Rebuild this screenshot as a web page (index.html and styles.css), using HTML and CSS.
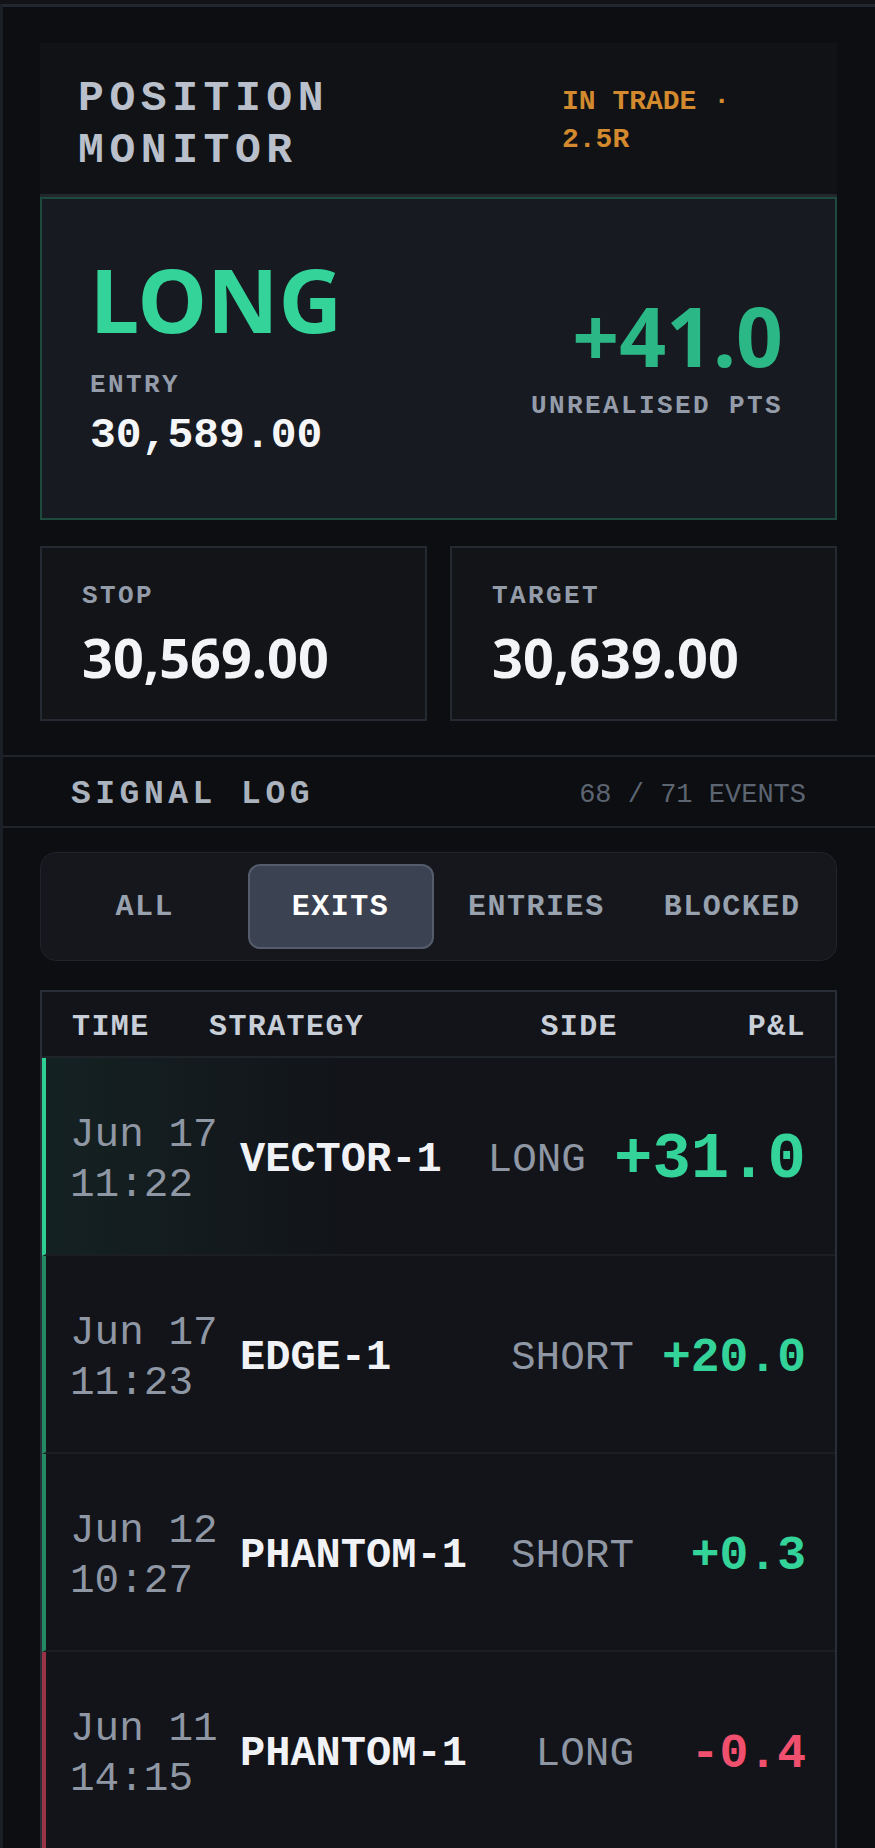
FILE: index.html
```html
<!DOCTYPE html>
<html>
<head>
    <title>Position Monitor</title>
    <link rel="stylesheet" href="styles.css">
</head>
<body>
    <div class="frame">
        <section class="monitor">
            <header class="monitor-head">
                <h1 class="title">POSITION MONITOR</h1>
                <span class="status">IN TRADE · 2.5R</span>
            </header>

            <div class="position">
                <div class="position-main">
                    <div class="side-big">LONG</div>
                    <div class="label entry-label">ENTRY</div>
                    <div class="entry-value">30,589.00</div>
                </div>
                <div class="position-pnl">
                    <div class="pnl-big">+41.0</div>
                    <div class="label pnl-label">UNREALISED PTS</div>
                </div>
            </div>

            <div class="levels">
                <div class="level-card">
                    <div class="label">STOP</div>
                    <div class="level-value">30,569.00</div>
                </div>
                <div class="level-card">
                    <div class="label">TARGET</div>
                    <div class="level-value">30,639.00</div>
                </div>
            </div>
        </section>

        <section class="log">
            <div class="log-head">
                <h2 class="log-title">SIGNAL LOG</h2>
                <span class="log-count">68 / 71 EVENTS</span>
            </div>

            <div class="log-body">
                <div class="tabs">
                    <button class="tab">ALL</button>
                    <button class="tab active">EXITS</button>
                    <button class="tab">ENTRIES</button>
                    <button class="tab">BLOCKED</button>
                </div>

                <div class="signal-table">
                    <div class="table-head">
                        <span class="h-time">TIME</span>
                        <span class="h-strategy">STRATEGY</span>
                        <span class="h-side">SIDE</span>
                        <span class="h-pnl">P&amp;L</span>
                    </div>

                    <div class="signal-row win latest">
                        <div class="time">Jun 17<br>11:22</div>
                        <div class="strategy">VECTOR-1</div>
                        <div class="side">LONG</div>
                        <div class="pnl up">+31.0</div>
                    </div>
                    <div class="signal-row win">
                        <div class="time">Jun 17<br>11:23</div>
                        <div class="strategy">EDGE-1</div>
                        <div class="side">SHORT</div>
                        <div class="pnl up">+20.0</div>
                    </div>
                    <div class="signal-row win">
                        <div class="time">Jun 12<br>10:27</div>
                        <div class="strategy">PHANTOM-1</div>
                        <div class="side">SHORT</div>
                        <div class="pnl up">+0.3</div>
                    </div>
                    <div class="signal-row loss">
                        <div class="time">Jun 11<br>14:15</div>
                        <div class="strategy">PHANTOM-1</div>
                        <div class="side">LONG</div>
                        <div class="pnl down">-0.4</div>
                    </div>
                </div>
            </div>
        </section>
    </div>
</body>
</html>
```

FILE: styles.css
```css
* {
    box-sizing: border-box;
}
body {
    margin: 0;
    padding-top: 4px;
    background: #111317;
    font-family: "Liberation Mono", "DejaVu Sans Mono", monospace;
    color: #f1f3f6;
}
.frame {
    background: #0c0e11;
    border-top: 3px solid #22272f;
    border-left: 3px solid #1b1f26;
    min-height: 1844px;
}

/* position monitor */
.monitor {
    padding: 36px 38px 34px 37px;
}
.monitor-head {
    display: flex;
    align-items: flex-start;
    background: #101216;
    padding: 30px 38px 18px;
    border-bottom: 3px solid #22262d;
}
.title {
    flex: 1;
    margin: 0;
    font-size: 43px;
    line-height: 51.6px;
    font-weight: bold;
    letter-spacing: 0.13em;
    color: #b9c0cb;
}
.status {
    flex: 0 0 237px;
    margin-top: 10px;
    font-size: 28px;
    line-height: 38px;
    font-weight: bold;
    color: #d38a2e;
}
.label {
    font-size: 26px;
    font-weight: bold;
    letter-spacing: 2.4px;
    color: #949caa;
}
.position {
    display: flex;
    justify-content: space-between;
    align-items: center;
    background: #171a21;
    border: 2px solid #1d4a3c;
    padding: 56px 48px 58px;
}
.side-big {
    font-family: "Noto Sans", "Open Sans", sans-serif;
    font-size: 88px;
    line-height: 1;
    font-weight: bold;
    color: #34d399;
}
.entry-label {
    margin-top: 27px;
}
.entry-value {
    margin-top: 11px;
    font-size: 43px;
    font-weight: bold;
    color: #f5f6f8;
}
.position-pnl {
    padding-right: 4px;
    text-align: right;
}
.pnl-big {
    font-family: "Noto Sans", "Open Sans", sans-serif;
    font-size: 82px;
    line-height: 1;
    font-weight: bold;
    color: #2bb886;
}
.pnl-label {
    margin-top: 15px;
}
.levels {
    display: grid;
    grid-template-columns: 1fr 1fr;
    gap: 23px;
    margin-top: 26px;
}
.level-card {
    background: #121418;
    border: 2px solid #252932;
    padding: 33px 40px 35px;
}
.level-value {
    margin-top: 19px;
    font-family: "Noto Sans", "Open Sans", sans-serif;
    font-size: 54px;
    line-height: 1;
    font-weight: bold;
    color: #f3f4f6;
}

/* signal log */
.log-head {
    display: flex;
    justify-content: space-between;
    align-items: center;
    border-top: 2px solid #1f232a;
    border-bottom: 2px solid #1f232a;
    padding: 19px 69px 13px 68px;
}
.log-title {
    margin: 0;
    font-size: 33px;
    font-weight: bold;
    letter-spacing: 4.5px;
    color: #aab2be;
}
.log-count {
    font-size: 27px;
    color: #5d6572;
}
.log-body {
    padding: 24px 38px 0 37px;
}
.tabs {
    display: grid;
    grid-template-columns: repeat(4, 1fr);
    gap: 10px;
    padding: 11px;
    background: #15171c;
    border: 1px solid #20232a;
    border-radius: 16px;
}
.tab {
    height: 85px;
    border: 2px solid transparent;
    border-radius: 12px;
    background: none;
    font-family: inherit;
    font-size: 30px;
    font-weight: bold;
    letter-spacing: 1.5px;
    color: #98a1ae;
    cursor: pointer;
}
.tab.active {
    background: #3b4251;
    border-color: #555c6b;
    color: #ffffff;
}
.signal-table {
    margin-top: 29px;
    background: #121419;
    border: 2px solid #2a2e37;
    border-bottom: none;
}
.table-head {
    display: flex;
    padding: 18px 29px 12px 30px;
    border-bottom: 2px solid #1f232a;
    font-size: 30px;
    font-weight: bold;
    letter-spacing: 1.4px;
    color: #c8ced8;
}
.h-time {
    width: 137px;
}
.h-strategy {
    flex: 1;
}
.h-pnl {
    width: 188px;
    text-align: right;
}
.signal-row {
    display: flex;
    align-items: center;
    min-height: 198px;
    padding: 8px 29px 0 24px;
    border-left: 4px solid #238a63;
    border-bottom: 2px solid #1b1e23;
}
.signal-row.latest {
    border-left-color: #2fcf94;
    background: linear-gradient(90deg, rgba(52, 211, 153, 0.07), rgba(52, 211, 153, 0) 38%);
}
.signal-row.loss {
    border-left-color: #9a3347;
}
.time {
    width: 170px;
    font-size: 41px;
    line-height: 50px;
    color: #8f97a4;
}
.strategy {
    flex: 1;
    font-size: 42px;
    font-weight: bold;
    color: #f1f2f5;
}
.side {
    font-size: 41px;
    color: #8f97a4;
}
.pnl {
    min-width: 144px;
    margin-left: 28px;
    text-align: right;
    font-size: 48px;
    font-weight: bold;
}
.latest .pnl {
    font-size: 64px;
}
.pnl.up {
    color: #34d399;
}
.pnl.down {
    color: #f0506e;
}
```
